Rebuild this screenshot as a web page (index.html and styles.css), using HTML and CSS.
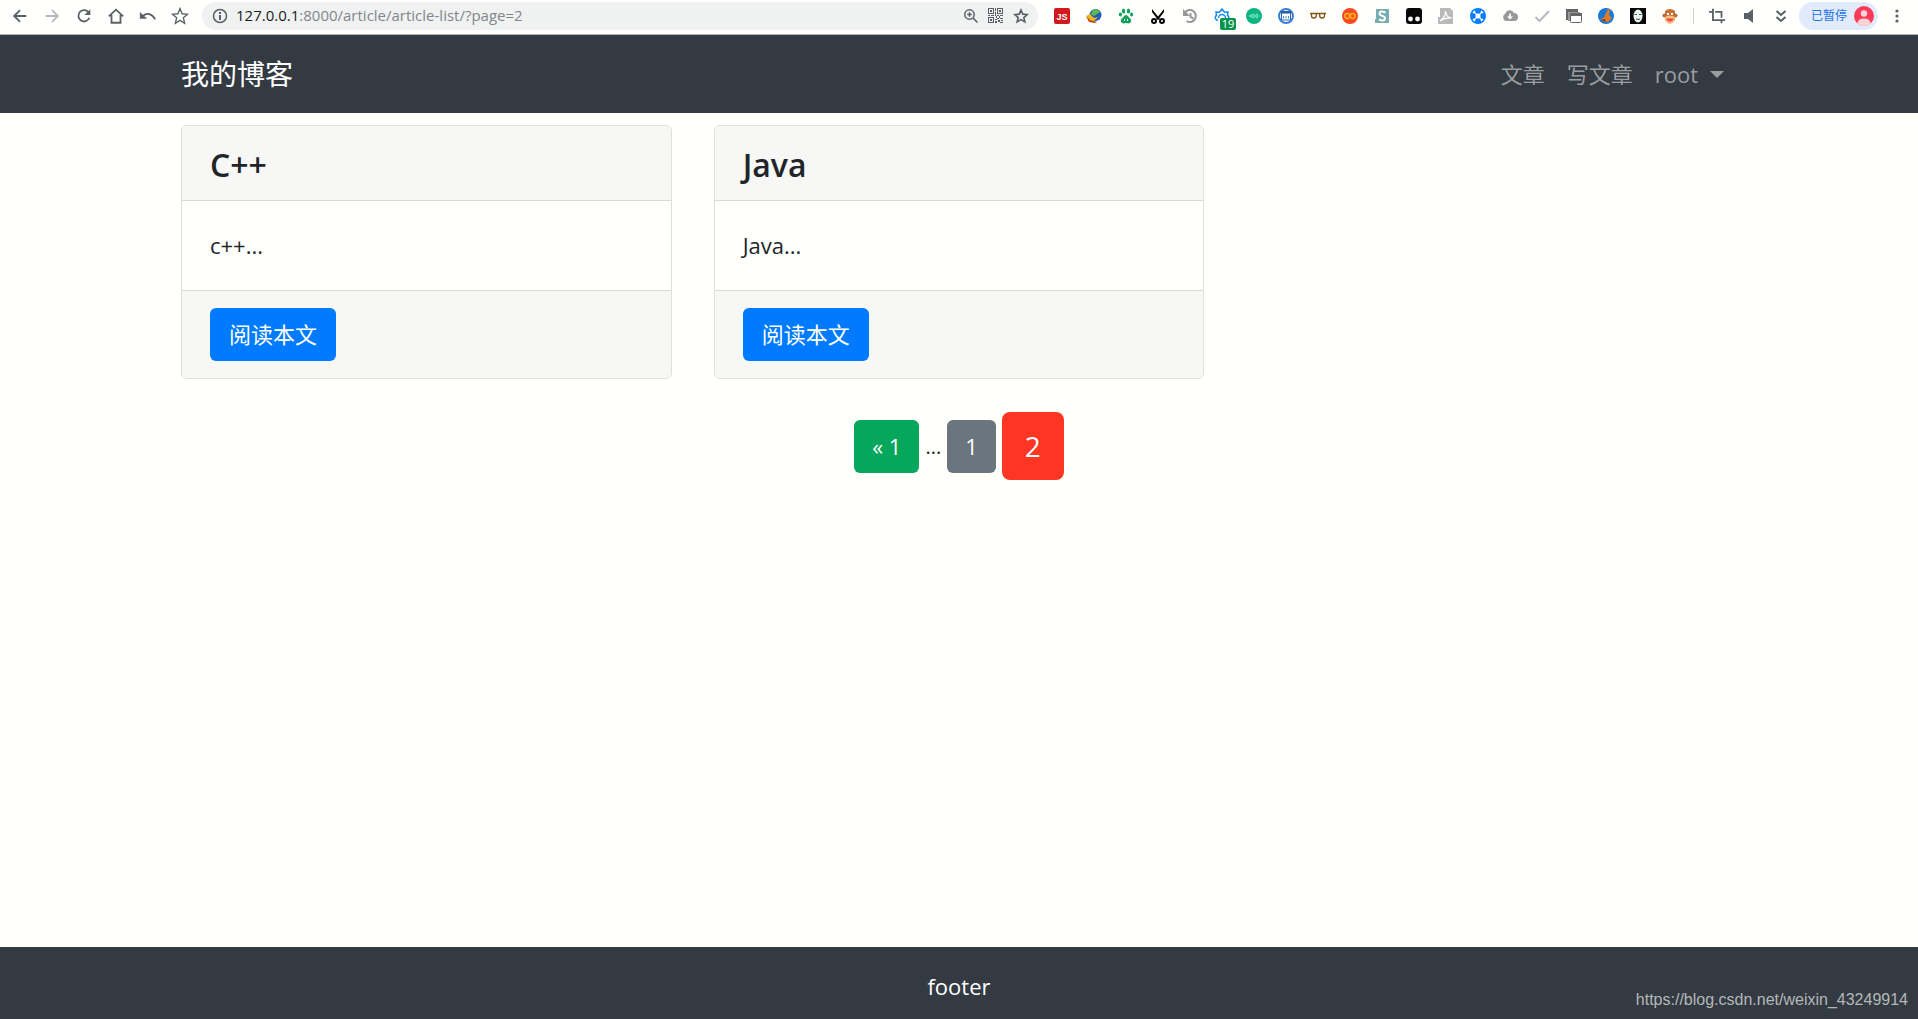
FILE: index.html
```html
<!DOCTYPE html>
<html lang="zh-CN">
<head>
<meta charset="utf-8">
<title>我的博客</title>
<link rel="stylesheet" href="styles.css">
</head>
<body>
<div class="toolbar">
  <div class="tools">
    <button class="tool" aria-label="Back"><svg viewBox="0 0 20 20"><path class="ln" d="M17 10H4M10 3.500L3.500 10L10 16.500"/></svg></button>
    <button class="tool faded" aria-label="Forward"><svg viewBox="0 0 20 20"><path class="ln" d="M3 10h13M10 3.500L16.500 10L10 16.500"/></svg></button>
    <button class="tool" aria-label="Reload"><svg viewBox="0 0 20 20"><path class="ln" d="M15.500 6.500A6.300 6.300 0 1 0 16 12"/><path d="M17 2.500v6.500h-6.500z"/></svg></button>
    <button class="tool" aria-label="Home"><svg viewBox="0 0 20 20"><path class="ln" d="M2 10.500L10 3l8 7.500M5 9v8.500h10V9"/></svg></button>
    <button class="tool" aria-label="Undo"><svg viewBox="0 0 20 20"><path class="ln" d="M4 10Q12 4 18 13.500"/><path d="M1 5.500v7.500h8z"/></svg></button>
    <button class="tool" aria-label="Bookmarks"><svg viewBox="0 0 20 20"><path class="ln thin" d="M10 1.800l2.300 5.700 6.100.5-4.700 4 1.500 6-5.200-3.200L4.800 18l1.500-6-4.700-4 6.100-.5z"/></svg></button>
  </div>
  <div class="omnibox">
    <svg class="info" viewBox="0 0 16 16"><circle class="ln thin" cx="8" cy="8" r="6.500"/><path d="M7 7h2v5H7zM7 4h2v2H7z"/></svg>
    <span class="url"><b>127.0.0.1</b>:8000/article/article-list/?page=2</span>
    <button class="mini" aria-label="Zoom"><svg viewBox="0 0 16 16"><circle class="ln thin" cx="6.500" cy="6.500" r="4.700"/><path class="ln thin" d="M10 10l4.500 4.500M4.200 6.500h4.600M6.500 4.200v4.600"/></svg></button>
    <button class="mini" aria-label="QR code"><svg class="qr" viewBox="0 0 15 15" shape-rendering="crispEdges"><path fill-rule="evenodd" d="M0 0h6v6H0zM1 1v4h4V1zM9 0h6v6H9zM10 1v4h4V1zM0 9h6v6H0zM1 10v4h4v-4zM2 2h2v2H2zM11 2h2v2h-2zM2 11h2v2H2zM7 0h1v3H7zM7 4h1v4H7zM0 7h2v1H0zM3 7h3v1H3zM9 7h2v1H9zM12 7h3v1h-3zM8 8h1v2H8zM11 8h1v2h-1zM9 10h2v1H9zM12 10h3v1h-3zM7 11h2v1H7zM10 12h2v2h-2zM13 12h2v1h-2zM7 13h2v2H7zM12 14h3v1h-3z"/></svg></button>
    <button class="mini" aria-label="Add bookmark"><svg viewBox="0 0 20 20"><path class="ln" d="M10 2.500l2.200 5.200 5.600.5-4.300 3.700 1.300 5.500-4.800-2.900-4.800 2.900 1.300-5.500-4.300-3.700 5.600-.5z"/></svg></button>
  </div>
  <div class="tools">
    <button class="tool" aria-label="JS"><svg viewBox="0 0 16 16"><rect width="16" height="16" rx="2" fill="#d4191c"/><text x="8" y="12" text-anchor="middle" class="js">JS</text></svg></button>
    <button class="tool" aria-label="Download manager"><svg viewBox="0 0 16 16"><circle cx="9.500" cy="7" r="6" fill="#245cba"/><path d="M7 2q4-2 7 2l-3 2-3 2-3-2z" fill="#58bd4a"/><path d="M0 8l4-2 4 4 4-1-4 4-5-1z" fill="#f4b51b"/><path d="M0 8l4 4 4 1 3 1-2 1-6-1z" fill="#af4f13"/></svg></button>
    <button class="tool" aria-label="Search helper"><svg viewBox="0 0 16 16" class="green"><ellipse cx="5.500" cy="3" rx="1.700" ry="2.500"/><ellipse cx="10.500" cy="3" rx="1.700" ry="2.500"/><ellipse cx="2.400" cy="6.500" rx="1.600" ry="2"/><ellipse cx="13.600" cy="6.500" rx="1.600" ry="2"/><path d="M8 7q2 0 3 2.500 3 2 2 4.500-1.500 2.200-5 1-3.500 1.200-5-1-1-2.500 2-4.500Q6 7 8 7z"/><path fill="#fff" d="M6 11h1v2H6zM9 11h1v2H9z"/></svg></button>
    <button class="tool" aria-label="Scissors"><svg viewBox="0 0 16 16" class="black"><path d="M2 1l8 10-2 1L2 4zM14 1v3l-6 8-2-1z"/><circle class="ln" cx="4" cy="13" r="2"/><circle class="ln" cx="12" cy="13" r="2"/></svg></button>
    <button class="tool gray" aria-label="History"><svg viewBox="0 0 16 16"><path class="ln" d="M3 4.500A6 6 0 1 1 4.500 13M8.500 5v4l3 1.500"/><path d="M1 1v7h7z"/></svg></button>
    <button class="tool" aria-label="Sync, 19"><svg viewBox="0 0 16 16" class="blue"><path class="ln thin" d="M4 12H2.500Q0 9 2.500 7.500L2 4l3.500.3L8 1l2.500 3.300L14 4l-.5 3.500Q16 9 14 12h-2M4.500 10a3.500 3.500 0 1 1 7 0"/></svg><span class="badge">19</span></button>
    <button class="tool" aria-label="Audio"><svg viewBox="0 0 16 16"><circle cx="8" cy="8" r="8" fill="#0bb583"/><path d="M3 8h1M5 6.500v3M7 5.500v5M9 6.500v3M11 5.500v5M13 7.500v1" stroke="#b9f2df"/></svg></button>
    <button class="tool" aria-label="Window"><svg viewBox="0 0 16 16"><circle cx="8" cy="8" r="7" fill="#fff" stroke="#357fd9" stroke-width="2"/><path d="M3.500 4h9v8h-9z" fill="#fff" stroke="#346ab4"/><path d="M3 3h10v2.500H3z" fill="#285d9e"/><path d="M5.500 8v2.500M8 8v2.500M10.500 8v2.500" stroke="#448bdd"/></svg></button>
    <button class="tool" aria-label="Glasses"><svg viewBox="0 0 16 16" fill="none" stroke="#855313" stroke-width="1.300"><path d="M0 5.500h16M1.500 5.500v2.500q0 2 2.300 2T6.300 8V5.500M9.700 5.500V8q0 2 2.300 2t2.500-2V5.500"/></svg></button>
    <button class="tool" aria-label="Infinity"><svg viewBox="0 0 16 16"><circle cx="8" cy="8" r="8" fill="#fb4a21"/><circle cx="5.300" cy="8" r="2.400" fill="none" stroke="#ffb414" stroke-width="1.500"/><circle cx="10.700" cy="8" r="2.400" fill="none" stroke="#ffb414" stroke-width="1.500"/></svg></button>
    <button class="tool" aria-label="S"><svg viewBox="0 0 16 16"><path d="M2 1h13v14H1v-4h1z" fill="#75adb0"/><path d="M11.500 4.500Q5.500 2 5.500 5.500C5.500 8.500 11 7 11 10.500Q10.500 14 5 11.500" fill="none" stroke="#fff" stroke-width="2"/></svg></button>
    <button class="tool" aria-label="User scripts"><svg class="black" viewBox="0 0 16 16"><rect width="16" height="16" rx="3"/><circle cx="4.500" cy="11" r="2.400" fill="#fff"/><circle cx="11.500" cy="11" r="2.400" fill="#fff"/></svg></button>
    <button class="tool" aria-label="PDF"><svg viewBox="0 0 16 16"><path d="M2 0h10l3 3v13H0V9h2z" fill="#b9b9b9"/><path d="M2 13Q8 9 7.500 3q1 7 6.500 7-6-1-12 3z" fill="none" stroke="#fff" stroke-width="1.200"/></svg></button>
    <button class="tool" aria-label="Network"><svg viewBox="0 0 16 16"><circle cx="8" cy="8" r="8" fill="#087eff"/><path d="M4 4l8 8M12 4l-8 8" stroke="#fff" stroke-width="1.200"/><circle cx="8" cy="8" r="2.500" fill="#fff"/><path d="M3 5l2-2M11 3l2 2M3 11l2 2M11 13l2-2" stroke="#fff" stroke-width="1.500"/></svg></button>
    <button class="tool gray" aria-label="Cloud download"><svg viewBox="0 0 16 16"><path d="M4 13a4 4 0 0 1-.5-7.500A4.500 4.500 0 0 1 12 5a4 4 0 0 1 0 8z"/><path d="M7.200 5.500h1.600v3H11L8 11.500 5 8.500h2.200z" fill="#fff"/></svg></button>
    <button class="tool faded" aria-label="Check"><svg viewBox="0 0 16 16"><path class="ln" d="M1.500 9l4 4L15 3"/></svg></button>
    <button class="tool" aria-label="Windows"><svg viewBox="0 0 16 16" fill="none"><path d="M0 1h12v3H3v8H0z" fill="#666"/><path d="M2 4h12v3H5v6H2z" fill="#999"/><rect x="4.500" y="5.500" width="11" height="9" rx="1" fill="#fff" stroke="#666"/><path d="M4 5h12v3H4z" fill="#666"/></svg></button>
    <button class="tool" aria-label="Cleaner"><svg viewBox="0 0 16 16"><circle cx="8" cy="8" r="8" fill="#1579d5"/><path d="M10 1l2 1-1 5 3 3-4 4H6L2 11q4 0 5-4z" fill="#e07b2c"/><path d="M3 12l4-1 1 3-3-1z" fill="#733a27"/></svg></button>
    <button class="tool" aria-label="Mask"><svg class="black" viewBox="0 0 16 16"><path d="M0 0h16v16H0z"/><ellipse cx="8" cy="8" rx="4.500" ry="6.500" fill="#e9f3ef"/><path d="M4.500 6.500h2.500M9 6.500h2.500M6 11q2 1 4 0" stroke="#425c58" fill="none"/></svg></button>
    <button class="tool" aria-label="Monkey"><svg viewBox="0 0 16 16"><circle cx="2.500" cy="7.500" r="2" fill="#b56c36"/><circle cx="13.500" cy="7.500" r="2" fill="#b56c36"/><path d="M3 3Q8-1 13 3v9q-5 7-10 0z" fill="#c66f37"/><path d="M3 9q5-3 10 0 0 6-5 6t-5-6z" fill="#fac178"/><path d="M4.500 10q3.500 1 7 0-.5 3.500-3.500 3.500T4.500 10z" fill="#e9484b"/><path d="M5 6h2M9 6h2" stroke="#fff" stroke-width="2"/></svg></button>
  </div>
  <span class="divider"></span>
  <div class="tools">
    <button class="tool" aria-label="Crop"><svg viewBox="0 0 20 20"><path class="ln" d="M5.500 2v12.500H19M1 5.500h4M8 5.500h7V12M15 14v4"/></svg></button>
    <button class="tool" aria-label="Sound"><svg viewBox="0 0 16 16"><path d="M3 5h4l5-4v14l-5-4H3z"/></svg></button>
    <button class="tool" aria-label="More tools"><svg viewBox="0 0 16 16"><path class="ln" d="M3.500 3L8 7l4.500-4M3.500 9L8 13l4.500-4"/></svg></button>
  </div>
  <button class="profile">已暂停<svg viewBox="0 0 20 20"><circle cx="10" cy="10" r="10" fill="#fc3b59"/><circle cx="10" cy="7.500" r="3.200" fill="#ffd2d8"/><path d="M3.300 17.400Q4 12.500 10 12.500t6.700 4.900Q10 22.500 3.300 17.400z" fill="#ffd2d8"/></svg></button>
  <button class="tool" aria-label="Menu"><svg viewBox="0 0 16 16"><circle cx="8" cy="3" r="1.600"/><circle cx="8" cy="8" r="1.600"/><circle cx="8" cy="13" r="1.600"/></svg></button>
</div>

<header class="navbar">
  <nav class="container">
    <a class="brand" href="#">我的博客</a>
    <a class="nav-link" href="#">文章</a>
    <a class="nav-link" href="#">写文章</a>
    <a class="nav-link caret" href="#">root</a>
  </nav>
</header>

<main class="container">
  <div class="cards">
    <article class="card">
      <h4 class="card-header">C++</h4>
      <p class="card-body">c++...</p>
      <div class="card-footer"><a class="btn primary" href="#">阅读本文</a></div>
    </article>
    <article class="card">
      <h4 class="card-header">Java</h4>
      <p class="card-body">Java...</p>
      <div class="card-footer"><a class="btn primary" href="#">阅读本文</a></div>
    </article>
  </div>
  <nav class="pages">
    <a class="btn success" href="#">« 1</a>
    <span class="dots">...</span>
    <a class="btn secondary" href="#">1</a>
    <a class="btn danger" href="#">2</a>
  </nav>
</main>

<footer class="footer">
  <p>footer</p>
  <span class="watermark">https://blog.csdn.net/weixin_43249914</span>
</footer>
</body>
</html>
```
FILE: styles.css
```css
* {
  box-sizing: border-box;
}

body {
  margin: 0;
  min-height: 100vh;
  display: flex;
  flex-direction: column;
  background: #fffffb;
  color: #212529;
  font: 22px/33px "Open Sans", "Noto Sans CJK SC", sans-serif;
}

a {
  color: inherit;
  text-decoration: none;
}

h4, p {
  margin: 0;
}

/* Browser toolbar */
.toolbar {
  display: flex;
  align-items: center;
  height: 35px;
  padding: 0 5px 3px 4px;
  border-bottom: 1px solid #b4b5b2;
  background: #fffffd;
}

.tools {
  display: flex;
}

button {
  padding: 0;
  border: 0;
  background: none;
  color: #5a6065;
  font: inherit;
}

.tool {
  position: relative;
  display: flex;
  align-items: center;
  justify-content: center;
  width: 32px;
  height: 28px;
}

.tool svg {
  width: 16px;
  height: 16px;
}

.tool svg[viewBox="0 0 20 20"] {
  width: 18px;
  height: 18px;
}

.toolbar svg:not([fill]) {
  fill: currentColor;
}

.toolbar .ln {
  fill: none;
  stroke: currentColor;
  stroke-width: 2;
}

.toolbar .thin {
  stroke-width: 1.5;
}

.faded {
  color: #b8babb;
}

.gray {
  color: #989898;
}

.green {
  color: #11a35b;
}

.black {
  color: #080808;
}

.blue {
  color: #168bf0;
}

.js {
  fill: #fff;
  font: 700 9px "Liberation Sans", sans-serif;
}

.badge {
  position: absolute;
  right: 2px;
  bottom: 0;
  width: 16px;
  border-radius: 2px;
  background: #07944d;
  color: #fff;
  font: 11px/12px "Open Sans", sans-serif;
}

.omnibox {
  flex: 1;
  display: flex;
  align-items: center;
  height: 28px;
  margin: 0 8px 0 6px;
  padding: 0 5px 0 10px;
  border-radius: 14px;
  background: #f0f2f2;
  color: #5a6065;
}

.info {
  width: 16px;
  height: 16px;
}

.url {
  flex: 1;
  margin-left: 8px;
  color: #80868b;
  font-size: 15px;
}

.url b {
  color: #202124;
  font-weight: 400;
}

.mini {
  display: flex;
  align-items: center;
  justify-content: center;
  width: 25px;
  height: 28px;
}

.mini svg {
  width: 16px;
  height: 16px;
}

.mini .qr {
  width: 15px;
  height: 15px;
}

.divider {
  width: 1px;
  height: 16px;
  margin: 0 7px;
  background: #cfd1d1;
}

.profile {
  display: flex;
  align-items: center;
  justify-content: space-between;
  width: 79px;
  height: 28px;
  margin: 0 3px 0 2px;
  padding: 0 4px 0 12px;
  border-radius: 14px;
  background: #e1ebfb;
  color: #1a73e8;
  font-size: 12px;
}

.profile svg {
  width: 20px;
  height: 20px;
}

/* Site */
.container {
  width: 100%;
  max-width: 1598px;
  margin: 0 auto;
  padding: 0 21px;
}

.navbar {
  padding: 11px 0;
  background: #343a42;
}

.navbar .container {
  display: flex;
  align-items: center;
  height: 56px;
}

.brand {
  margin-right: auto;
  color: #fff;
  font-size: 28px;
}

.nav-link {
  padding: 0 11px;
  color: #9a9da0;
}

.nav-link:last-child {
  padding-right: 13px;
}

.caret {
  display: flex;
  align-items: center;
}

.caret::after {
  content: "";
  margin-left: 12px;
  border: 7px solid transparent;
  border-top-color: currentColor;
  border-bottom: 0;
}

.cards {
  display: grid;
  grid-template-columns: repeat(3, 1fr);
  gap: 42px;
  margin: 12px 0 33px;
}

.card {
  overflow: hidden;
  border: 1px solid #dfe0dd;
  border-radius: 6px;
  background: #fffffc;
}

.card-header {
  padding: 19px 28px 15px;
  border-bottom: 1px solid #d8dad7;
  background: #f7f7f5;
  font-size: 32px;
  font-weight: 600;
  line-height: 40px;
}

.card-body {
  padding: 28px;
}

.card-footer {
  display: flex;
  padding: 17px 28px;
  border-top: 1px solid #d8dad7;
  background: #f7f7f5;
}

.btn {
  padding: 9px 17px;
  border: 1px solid transparent;
  border-radius: 6px;
  color: #fff;
}

.primary {
  padding: 9px 18px;
  background: #007bff;
}

.success {
  background: #04a75c;
}

.secondary {
  background: #6b757d;
}

.danger {
  padding: 12px 22px;
  border-radius: 8px;
  background: #ff3524;
  font-size: 28px;
  line-height: 42px;
}

.pages {
  display: flex;
  align-items: center;
  justify-content: center;
  gap: 6px;
}

.dots {
  font-size: 20px;
}

.footer {
  position: relative;
  margin-top: auto;
  padding: 23px 0 16px;
  background: #343a42;
  color: #fff;
  text-align: center;
}

.watermark {
  position: absolute;
  right: 10px;
  bottom: 8px;
  color: #b4b7b9;
  font: 16px/22px "Liberation Sans", sans-serif;
}
```
